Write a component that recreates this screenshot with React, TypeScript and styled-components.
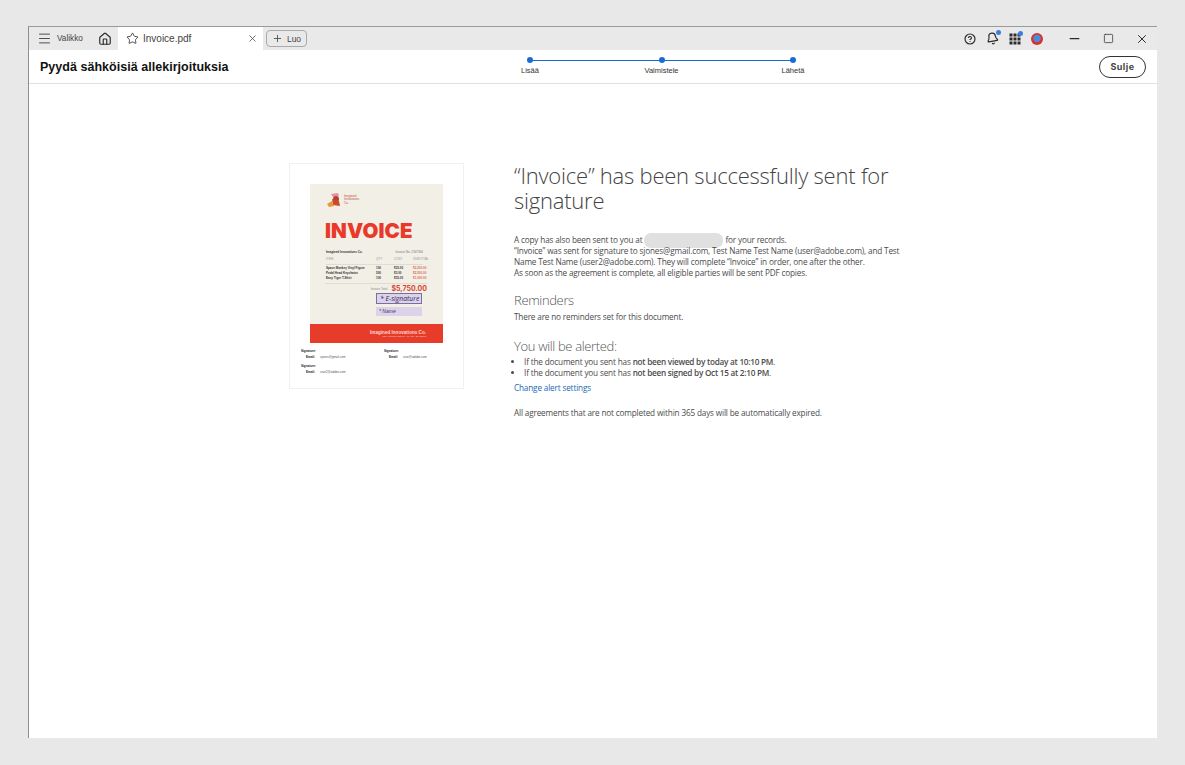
import styled, { createGlobalStyle } from "styled-components";
import { Menu, Home, Star, X, Plus, Minus, Square, CircleHelp, Bell } from "lucide-react";

const GlobalStyle = createGlobalStyle`
	html, body {
		margin: 0;
		padding: 0;
		background: #e8e8e8;
	}
	* {
		box-sizing: border-box;
	}
`;

const items = [
	["Space Monkey Vinyl Figure", "100", "$15.00", "$2,200.00"],
	["Pedal Head Keychains", "500", "$3.00", "$2,500.00"],
	["Easy Tiger T-Shirt", "100", "$15.00", "$1,000.00"],
];

export default function App() {
	return (
		<Page>
			<GlobalStyle />
			<Window>
				<TabBar>
					<MenuButton>
						<Menu size={15} strokeWidth={1.5} />
						<span>Valikko</span>
					</MenuButton>
					<HomeButton>
						<Home size={14} strokeWidth={2} />
					</HomeButton>
					<Tab>
						<Star size={13} strokeWidth={1.5} />
						<TabName>Invoice.pdf</TabName>
						<X size={11} strokeWidth={1.8} color="#555" />
					</Tab>
					<NewButton>
						<Plus size={11} strokeWidth={1.8} />
						<span>Luo</span>
					</NewButton>
					<TabBarRight>
						<CircleHelp size={12} strokeWidth={2.4} />
						<BadgeIcon>
							<TiltedBell size={13} strokeWidth={2.2} />
							<Dot />
						</BadgeIcon>
						<BadgeIcon>
							<AppsIcon />
							<Dot />
						</BadgeIcon>
						<Avatar />
						<WindowControls>
							<Minus size={15} strokeWidth={2} />
							<Square size={11} strokeWidth={1.6} />
							<X size={14} strokeWidth={1.7} />
						</WindowControls>
					</TabBarRight>
				</TabBar>
				<Header>
					<Title>Pyydä sähköisiä allekirjoituksia</Title>
					<Stepper>
						<StepLine />
						<Step>
							<StepDot />
							<StepLabel>Lisää</StepLabel>
						</Step>
						<Step>
							<StepDot />
							<StepLabel>Valmistele</StepLabel>
						</Step>
						<Step>
							<StepDot />
							<StepLabel>Lähetä</StepLabel>
						</Step>
					</Stepper>
					<CloseButton>Sulje</CloseButton>
				</Header>
				<Body>
					<Thumb>
						<InvoicePage>
							<Brand>
								<BrandLogo />
								<BrandName>
									Imagined
									<br />
									Innovations
									<br />
									Co.
								</BrandName>
							</Brand>
							<InvoiceTitle>INVOICE</InvoiceTitle>
							<MetaRow>
								<strong>Imagined Innovations Co.</strong>
								<span>Invoice No. 2347364</span>
							</MetaRow>
							<ItemHead>
								<span>ITEM</span>
								<span>QTY</span>
								<span>COST</span>
								<span>SUBTOTAL</span>
							</ItemHead>
							{items.map((row) => (
								<ItemRow key={row[0]}>
									<span>{row[0]}</span>
									<span>{row[1]}</span>
									<span>{row[2]}</span>
									<em>{row[3]}</em>
								</ItemRow>
							))}
							<TotalRow>
								<small>Invoice Total</small>
								<b>$5,750.00</b>
							</TotalRow>
							<SignField>* E-signature</SignField>
							<NameField>* Name</NameField>
							<Footer>
								<strong>Imagined Innovations Co.</strong>
								<span>123 Anywhere Street, Any City, ST 12345</span>
							</Footer>
						</InvoicePage>
						<Signers>
							<Signer>
								<b>Signature:</b>
								<p>
									<b>Email:</b>
									<span>sjones@gmail.com</span>
								</p>
							</Signer>
							<Signer>
								<b>Signature:</b>
								<p>
									<b>Email:</b>
									<span>user@adobe.com</span>
								</p>
							</Signer>
							<Signer>
								<b>Signature:</b>
								<p>
									<b>Email:</b>
									<span>user2@adobe.com</span>
								</p>
							</Signer>
						</Signers>
					</Thumb>
					<Content>
						<Heading>“Invoice” has been successfully sent for signature</Heading>
						<Paragraph>
							A copy has also been sent to you at <Redacted /> for your records.
							<br />
							“Invoice” was sent for signature to sjones@gmail.com, Test Name Test Name (user@adobe.com), and Test Name
							Test Name (user2@adobe.com). They will complete “Invoice” in order, one after the other.
							<br />
							As soon as the agreement is complete, all eligible parties will be sent PDF copies.
						</Paragraph>
						<SubHeading $gap={14}>Reminders</SubHeading>
						<ReminderNote>There are no reminders set for this document.</ReminderNote>
						<SubHeading $gap={16}>You will be alerted:</SubHeading>
						<Alerts>
							<li>
								If the document you sent has <strong>not been viewed by today at 10:10 PM</strong>.
							</li>
							<li>
								If the document you sent has <strong>not been signed by Oct 15 at 2:10 PM</strong>.
							</li>
						</Alerts>
						<AlertLink href="#">Change alert settings</AlertLink>
						<Expiry>All agreements that are not completed within 365 days will be automatically expired.</Expiry>
					</Content>
				</Body>
			</Window>
		</Page>
	);
}

function AppsIcon() {
	const cells = [0, 1, 2, 3, 4, 5, 6, 7, 8];
	return (
		<svg width="12" height="12" viewBox="0 0 12 12">
			{cells.map((c) => (
				<rect key={c} x={(c % 3) * 4 + 0.5} y={Math.floor(c / 3) * 4 + 0.5} width="3" height="3" fill="#2b2b2b" />
			))}
		</svg>
	);
}

function BrandLogo() {
	return (
		<svg width="15" height="14" viewBox="0 0 15 14">
			<path d="M4 1 L11 0 L12 3 L6 4 Z" fill="#e58fa8" />
			<circle cx="9" cy="6" r="3" fill="#b5402a" />
			<path d="M5 6 L12 8 L13 13 L6 12 Z" fill="#cf4a2c" />
			<path d="M0 11 L5 8 L7 13 L2 14 Z" fill="#e89a36" />
		</svg>
	);
}

const Page = styled.div`
	width: 1185px;
	height: 765px;
	padding: 26px 28px 27px 28px;
	background: #e8e8e8;
	font-family: "Liberation Sans", Arial, sans-serif;
	overflow: hidden;
`;

const Window = styled.div`
	height: 712px;
	display: flex;
	flex-direction: column;
	background: #fff;
	border-top: 1px solid #9a9a9a;
	border-left: 1px solid #8f8f8f;
`;

const TabBar = styled.div`
	height: 23px;
	flex: none;
	display: flex;
	align-items: center;
	background: #e9e9e9;
	color: #2c2c2c;
`;

const MenuButton = styled.div`
	display: flex;
	align-items: center;
	gap: 5px;
	width: 66px;
	padding-left: 8px;
	font-size: 8.2px;
	color: #444;
`;

const HomeButton = styled.div`
	width: 19px;
	display: flex;
	justify-content: center;
`;

const Tab = styled.div`
	width: 145px;
	height: 23px;
	display: flex;
	align-items: center;
	margin: 0 3px 0 4px;
	padding: 0 5px 0 8px;
	background: #fff;
`;

const TabName = styled.span`
	flex: 1;
	margin-left: 4px;
	font-size: 10px;
	color: #444;
`;

const NewButton = styled.div`
	width: 41px;
	height: 17px;
	display: flex;
	align-items: center;
	justify-content: center;
	gap: 4px;
	border: 1px solid #aaa;
	border-radius: 4px;
	font-size: 8.5px;
	color: #444;
`;

const TabBarRight = styled.div`
	margin-left: auto;
	display: flex;
	align-items: center;
	gap: 10px;
	padding-right: 8px;
`;

const BadgeIcon = styled.div`
	position: relative;
	display: flex;
`;

const TiltedBell = styled(Bell)`
	transform: rotate(-10deg);
`;

const Dot = styled.i`
	position: absolute;
	top: -2px;
	right: -2px;
	width: 5px;
	height: 5px;
	border-radius: 50%;
	background: #3b7de0;
`;

const Avatar = styled.div`
	width: 12px;
	height: 12px;
	border-radius: 50%;
	background: radial-gradient(circle at 50% 45%, #4a8ad8 0 38%, #d8322c 46%);
`;

const WindowControls = styled.div`
	display: flex;
	align-items: center;
	gap: 21px;
	margin-left: 14px;
`;

const Header = styled.header`
	height: 34px;
	flex: none;
	position: relative;
	display: flex;
	align-items: center;
	justify-content: space-between;
	padding: 0 11px;
	border-bottom: 1px solid #e0e0e0;
	background: #fff;
`;

const Title = styled.h1`
	margin: 0;
	font-size: 12.5px;
	font-weight: 700;
	letter-spacing: 0.03px;
	color: #111;
`;

const Stepper = styled.div`
	position: absolute;
	left: 486px;
	top: 7px;
	width: 293px;
	display: flex;
	justify-content: space-between;
`;

const StepLine = styled.div`
	position: absolute;
	left: 15px;
	right: 15px;
	top: 2.5px;
	height: 1.5px;
	background: #1a6bd8;
`;

const Step = styled.div`
	position: relative;
	width: 30px;
	display: flex;
	flex-direction: column;
	align-items: center;
	gap: 3px;
`;

const StepDot = styled.i`
	width: 6px;
	height: 6px;
	border-radius: 50%;
	background: #1a6bd8;
`;

const StepLabel = styled.span`
	font-size: 7.5px;
	line-height: 9px;
	color: #333;
	white-space: nowrap;
`;

const CloseButton = styled.button`
	width: 47px;
	height: 22px;
	padding: 0;
	background: #fff;
	border: 1.5px solid #333;
	border-radius: 11px;
	font-family: "Inter", sans-serif;
	font-size: 9px;
	font-weight: 700;
	letter-spacing: 0.5px;
	color: #444;
`;

const Body = styled.main`
	flex: 1;
	display: flex;
	align-items: flex-start;
	gap: 50px;
	padding: 79px 0 0 260px;
`;

const Thumb = styled.div`
	width: 175px;
	height: 226px;
	flex: none;
	display: flex;
	flex-direction: column;
	align-items: center;
	padding-top: 20px;
	border: 1px solid #f0f0f0;
`;

const InvoicePage = styled.div`
	width: 133px;
	height: 159px;
	display: flex;
	flex-direction: column;
	align-items: stretch;
	background: #f2efe6;
`;

const Brand = styled.div`
	display: flex;
	align-items: center;
	gap: 2px;
	height: 14px;
	margin: 9px 0 0 17px;
`;

const BrandName = styled.div`
	font-size: 3px;
	line-height: 3.4px;
	color: #c8503a;
`;

const InvoiceTitle = styled.div`
	margin: 14px 0 0 15px;
	font-family: "Inter", sans-serif;
	font-size: 20.5px;
	line-height: 20px;
	font-weight: 900;
	letter-spacing: 0.1px;
	color: #e8392a;
`;

const MetaRow = styled.div`
	display: flex;
	justify-content: space-between;
	margin: 9px 20px 0 16px;
	font-size: 3px;
	line-height: 4px;
	color: #777;
	strong {
		color: #333;
	}
`;

const itemColumns = `
	display: grid;
	grid-template-columns: 50px 18px 19px 1fr;
	margin: 0 20px 0 16px;
	font-size: 3px;
`;

const ItemHead = styled.div`
	${itemColumns}
	margin-top: 3px;
	padding-bottom: 3px;
	line-height: 4px;
	border-bottom: 1px solid #dfdcd2;
	color: #999;
	span:last-child {
		text-align: right;
	}
`;

const ItemRow = styled.div`
	${itemColumns}
	padding-top: 1px;
	line-height: 4px;
	font-weight: 700;
	color: #333;
	em {
		font-style: normal;
		text-align: right;
		color: #d96a55;
	}
`;

const TotalRow = styled.div`
	display: flex;
	align-items: center;
	justify-content: flex-end;
	gap: 4px;
	margin: 3px 16px 0 15px;
	height: 10px;
	border-top: 1px solid #dfdcd2;
	small {
		font-size: 3px;
		color: #888;
	}
	b {
		font-family: "Inter", sans-serif;
		font-size: 7px;
		font-weight: 700;
		color: #d9452f;
	}
`;

const SignField = styled.div`
	align-self: flex-end;
	width: 46px;
	height: 11px;
	margin: 0 21px 0 0;
	padding-left: 3px;
	background: #dcd2ea;
	border: 1px solid #7a6ea5;
	font-family: "Open Sans", sans-serif;
	font-size: 6.8px;
	font-weight: 400;
	line-height: 9px;
	font-style: italic;
	white-space: nowrap;
	color: #2f2b50;
`;

const NameField = styled.div`
	align-self: flex-end;
	width: 46px;
	height: 9px;
	margin: 3px 21px 0 0;
	padding-left: 3px;
	background: #dcd2ea;
	font-size: 5px;
	line-height: 9px;
	font-style: italic;
	color: #3f3a60;
`;

const Footer = styled.div`
	margin-top: auto;
	height: 19px;
	display: flex;
	flex-direction: column;
	align-items: flex-end;
	justify-content: center;
	padding-right: 17px;
	background: #e83c2a;
	color: #f6d7cf;
	strong {
		font-size: 4.6px;
		line-height: 5px;
	}
	span {
		font-size: 2.4px;
		line-height: 3px;
	}
`;

const Signers = styled.div`
	width: 100%;
	display: grid;
	grid-template-columns: 83px 1fr;
	row-gap: 5px;
	padding: 6px 0 0 11px;
`;

const Signer = styled.div`
	font-size: 3px;
	line-height: 4px;
	color: #555;
	b {
		color: #222;
	}
	p {
		display: flex;
		gap: 5px;
		margin: 2px 0 0 5px;
	}
`;

const Content = styled.section`
	width: 390px;
	font-family: "Open Sans", sans-serif;
	color: #4b4b4b;
`;

const bodyText = `
	font-size: 8.2px;
	line-height: 11px;
	letter-spacing: -0.16px;
	strong {
		font-weight: 600;
		letter-spacing: -0.25px;
	}
`;

const Heading = styled.h2`
	margin: 0 0 21px;
	font-size: 22px;
	line-height: 25px;
	font-weight: 300;
	letter-spacing: -0.22px;
	color: #444;
`;

const Paragraph = styled.p`
	margin: 0;
	${bodyText}
`;

const ReminderNote = styled.p`
	margin: 2px 0 0;
	${bodyText}
`;

const Redacted = styled.span`
	display: inline-block;
	width: 79px;
	height: 15px;
	margin: -3px 0;
	vertical-align: middle;
	border-radius: 7px;
	background: #e0e0e0;
`;

const SubHeading = styled.h3<{ $gap?: number }>`
	margin: ${(p) => p.$gap ?? 16}px 0 0;
	font-size: 13px;
	line-height: 17px;
	font-weight: 300;
	letter-spacing: -0.35px;
	color: #555;
`;

const Alerts = styled.ul`
	margin: 1px 0 0;
	padding: 0 0 0 10px;
	${bodyText}
`;

const AlertLink = styled.a`
	display: block;
	margin-top: 4px;
	${bodyText}
	color: #1a6ab0;
	text-decoration: none;
`;

const Expiry = styled.p`
	margin: 14px 0 0;
	${bodyText}
`;
